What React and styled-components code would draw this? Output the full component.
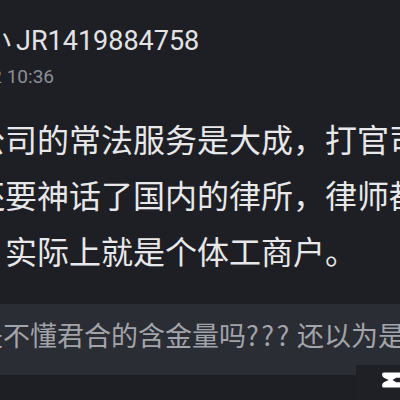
import styled, { createGlobalStyle } from "styled-components";

const GlobalStyle = createGlobalStyle`
  html, body {
    margin: 0;
    padding: 0;
    background: #1e1f24;
    overflow: hidden;
  }
  body {
    width: 400px;
    height: 400px;
  }
`;

const Page = styled.div`
  position: relative;
  width: 400px;
  height: 400px;
  overflow: hidden;
  background: #1e1f24;
  padding-top: 23px;
  box-sizing: border-box;
`;

const Header = styled.div`
  display: flex;
  flex-direction: column;
`;

const Name = styled.div`
  margin-left: -16px;
  font-family: Roboto, "Noto Sans CJK SC", sans-serif;
  font-size: 27px;
  line-height: 36px;
  color: #e3e3e6;
  white-space: nowrap;
`;

const NamePrefix = styled.span`
  margin-right: 5px;
`;

const Time = styled.div`
  margin-left: -46px;
  margin-top: 4px;
  font-family: Roboto, "Noto Sans CJK SC", sans-serif;
  font-size: 19px;
  line-height: 28px;
  color: #8c8e95;
  white-space: nowrap;
`;

const Body = styled.div`
  margin-top: 19px;
  margin-left: -27px;
  font-family: "Noto Sans CJK SC", "Noto Sans", sans-serif;
  font-size: 32px;
  line-height: 56px;
  color: #e8e8ea;
`;

const Line = styled.div`
  white-space: nowrap;
`;

const Quote = styled.div`
  margin-top: 26px;
  margin-left: -24px;
  width: 460px;
  height: 71px;
  box-sizing: border-box;
  background: #2b2d34;
  font-family: "Noto Sans CJK SC", "Noto Sans", sans-serif;
  font-size: 27px;
  line-height: 62px;
  color: #a2a4aa;
  white-space: nowrap;
`;

const Marks = styled.span`
  letter-spacing: 2.5px;
  margin-right: 5px;
`;

const Watermark = styled.div`
  position: absolute;
  right: 0;
  bottom: 0;
  width: 44px;
  height: 35px;
  background: #1f2025;
  display: flex;
  align-items: flex-start;
  padding: 5px 0 0 26px;
  box-sizing: border-box;
`;

const Logo = () => (
  <svg width="24" height="20" viewBox="0 0 24 20">
    <path
      fill="#ffffff"
      d="M0 2.5 Q0 0 2.5 0 H24 V7 H19 L14 10 L19 13 H24 V20 H2.5 Q0 20 0 17.5 Q0 15 2.5 13 L9 10 L2.5 7 Q0 5 0 2.5 Z"
    />
  </svg>
);

const App = () => {
  return (
    <>
      <GlobalStyle />
      <Page>
        <Header>
          <Name>
            <NamePrefix>小</NamePrefix>JR1419884758
          </Name>
          <Time>04-12 10:36</Time>
        </Header>
        <Body>
          <Line>公司的常法服务是大成，打官司的</Line>
          <Line>还要神话了国内的律所，律师都</Line>
          <Line>　实际上就是个体工商户。</Line>
        </Body>
        <Quote>
          是不懂君合的含金量吗<Marks>???</Marks>还以为是
        </Quote>
        <Watermark>
          <Logo />
        </Watermark>
      </Page>
    </>
  );
};

export default App;
